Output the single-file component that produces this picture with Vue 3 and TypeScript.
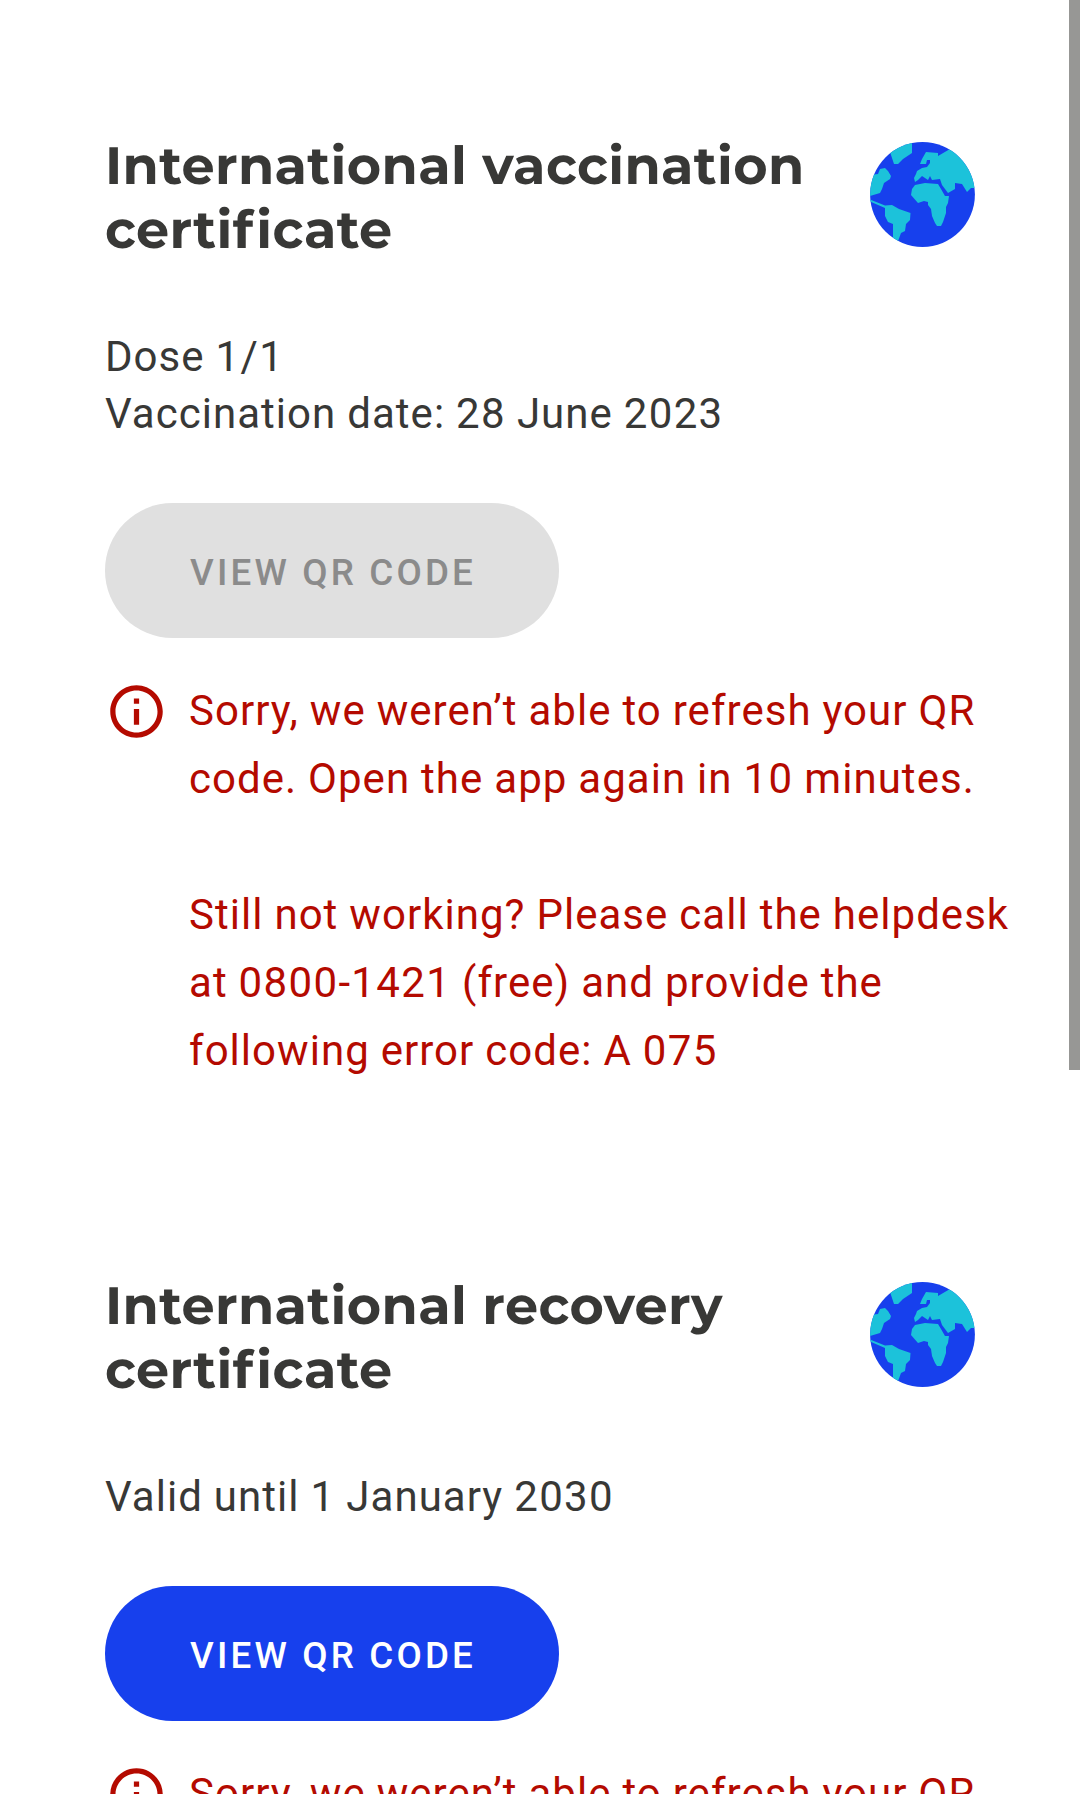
<script setup lang="ts">
interface Certificate {
  title: string
  details: string[]
  enabled: boolean
}

const certificates: Certificate[] = [
  {
    title: 'International vaccination',
    details: ['Dose 1/1', 'Vaccination date: 28 June 2023'],
    enabled: false,
  },
  {
    title: 'International recovery',
    details: ['Valid until 1 January 2030'],
    enabled: true,
  },
]

const message: string[][] = [
  ['Sorry, we weren’t able to refresh your QR', 'code. Open the app again in 10 minutes.'],
  [
    'Still not working? Please call the helpdesk',
    'at 0800-1421 (free) and provide the',
    'following error code: A 075',
  ],
]

// Numbers are tracked slightly wider than words.
const runs = (text: string): string[] => text.split(/(\d[\d\-/]*)/).filter(Boolean)
const isNumber = (run: string): boolean => /^\d/.test(run)
</script>

<template>
  <main class="screen">
    <article v-for="(cert, i) in certificates" :key="i" class="card">
      <header class="head">
        <h2 class="title">
          <span class="title-line">{{ cert.title }}</span>
          <span class="title-line">certi<span class="open">f</span>icate</span>
        </h2>
        <svg class="globe" viewBox="0 0 105 105" aria-hidden="true">
          <defs>
            <clipPath :id="'disc' + i"><circle cx="52.5" cy="52.5" r="52.4" /></clipPath>
          </defs>
          <g :clip-path="`url(#disc${i})`">
            <rect width="105" height="105" fill="#1740ed" />
            <g fill="#1cc2da">
              <path d="M20 10 L30 0 H42 V11 L33 17 L28 22 L24 22 Z" />
              <path d="M0 33 L8 32 L10 27 L15 26 L18 29 L21 34 L20 37 L14 41 L12 47 L10 51 L0 54 Z" />
              <path d="M0 57.500 L15 63.500 L22 63 L29 67 L40.500 71 L40 78 L36 82 L35 89 L31 91 L27 102 L25 105 H23 V82 L18 80 L15 74 V66 L0 59.500 Z" />
              <path d="M56 10 L68 11 L68 14 L80 7 L90 0 H105 V46 H101 L97 50 L92 42 L85 41 L85 47 L78 51 L72 43 L70 37 L62 38 L60 34 L58 38 L52 34 L48 38 L45 40 L44 36 L46 32 L47 29 L52 26 L57 25 L60 21 L60 18 L57 18 L56 22 L50 22 L52 17 Z" />
              <path d="M45 43 L55 41 L68 42 L71 47 L75 54 L79 54 L78 61 L76 65 V71 L73 80 L71 84 L67 84 L65 81 L62 74 L61 67 L58 63 L58 60 L54 59 L48 61 L41 53 L42 47 Z" />
            </g>
          </g>
        </svg>
      </header>
      <div class="details">
        <div v-for="d in cert.details" :key="d"><span v-for="(run, r) in runs(d)" :key="r" :class="{ number: isNumber(run) }">{{ run }}</span></div>
      </div>
      <button class="qr" :class="{ active: cert.enabled }" :disabled="!cert.enabled">VIEW QR CODE</button>
      <div class="error">
        <svg class="info" viewBox="0 0 24 24" aria-hidden="true">
          <path fill="#b40a00" d="M11 7h2v2h-2zm0 4h2v6h-2zm1-9C6.48 2 2 6.48 2 12s4.480 10 10 10 10-4.480 10-10S17.520 2 12 2zm0 18c-4.410 0-8-3.590-8-8s3.590-8 8-8 8 3.590 8 8-3.590 8-8 8z" />
        </svg>
        <div class="message">
          <p v-for="(paragraph, p) in message" :key="p">
            <span v-for="line in paragraph" :key="line" class="line"><span v-for="(run, r) in runs(line)" :key="r" :class="{ number: isNumber(run) }">{{ run }}</span></span>
          </p>
        </div>
      </div>
    </article>
    <div class="scrollbar"></div>
  </main>
</template>

<style>
body {
  background: #fff;
  overflow: hidden;
}
</style>

<style scoped>
.screen {
  position: relative;
  box-sizing: border-box;
  width: 1080px;
  height: 1794px;
  padding: 134px 0 0 105px;
  overflow: hidden;
  background: #fff;
  color: #383836;
  font-family: Roboto, sans-serif;
}
.card {
  margin-bottom: 189px;
}
.head {
  display: flex;
  justify-content: space-between;
  width: 870px;
  height: 194px;
}
.title {
  margin: 0;
  font: 700 52.5px/64px Montserrat, Inter, sans-serif;
  letter-spacing: 0.38px;
  text-rendering: geometricPrecision;
}
.title-line {
  display: block;
  white-space: nowrap;
}
.open {
  letter-spacing: 3.2px;
}
.globe {
  flex: none;
  width: 105px;
  height: 105px;
  margin-top: 8px;
}
.details {
  font-size: 42px;
  line-height: 57px;
  letter-spacing: 1.03px;
  word-spacing: -0.5px;
}
.number {
  letter-spacing: 1.34px;
}
.qr {
  display: block;
  width: 454px;
  height: 135px;
  margin-top: 61px;
  padding: 3px 0 0 2px;
  border: 0;
  border-radius: 68px;
  background: #e0e0e0;
  color: #8b8b8b;
  font: 500 36.75px/43px Roboto, sans-serif;
  letter-spacing: 3.16px;
}
.qr.active {
  background: #1740ed;
  color: #fff;
}
.error {
  display: flex;
  margin-top: 39px;
  color: #b40a00;
}
.info {
  flex: none;
  width: 63px;
  height: 63px;
  margin: 3px 21px 0 0;
}
.message {
  font-size: 42px;
  line-height: 68px;
  letter-spacing: 1.03px;
  word-spacing: -0.5px;
  white-space: nowrap;
}
.message p {
  margin: 0 0 68px;
}
.message p:last-child {
  margin: 0;
}
.line {
  display: block;
}
.scrollbar {
  position: absolute;
  top: 0;
  right: 0;
  width: 11px;
  height: 1070px;
  background: #979795;
}
</style>
